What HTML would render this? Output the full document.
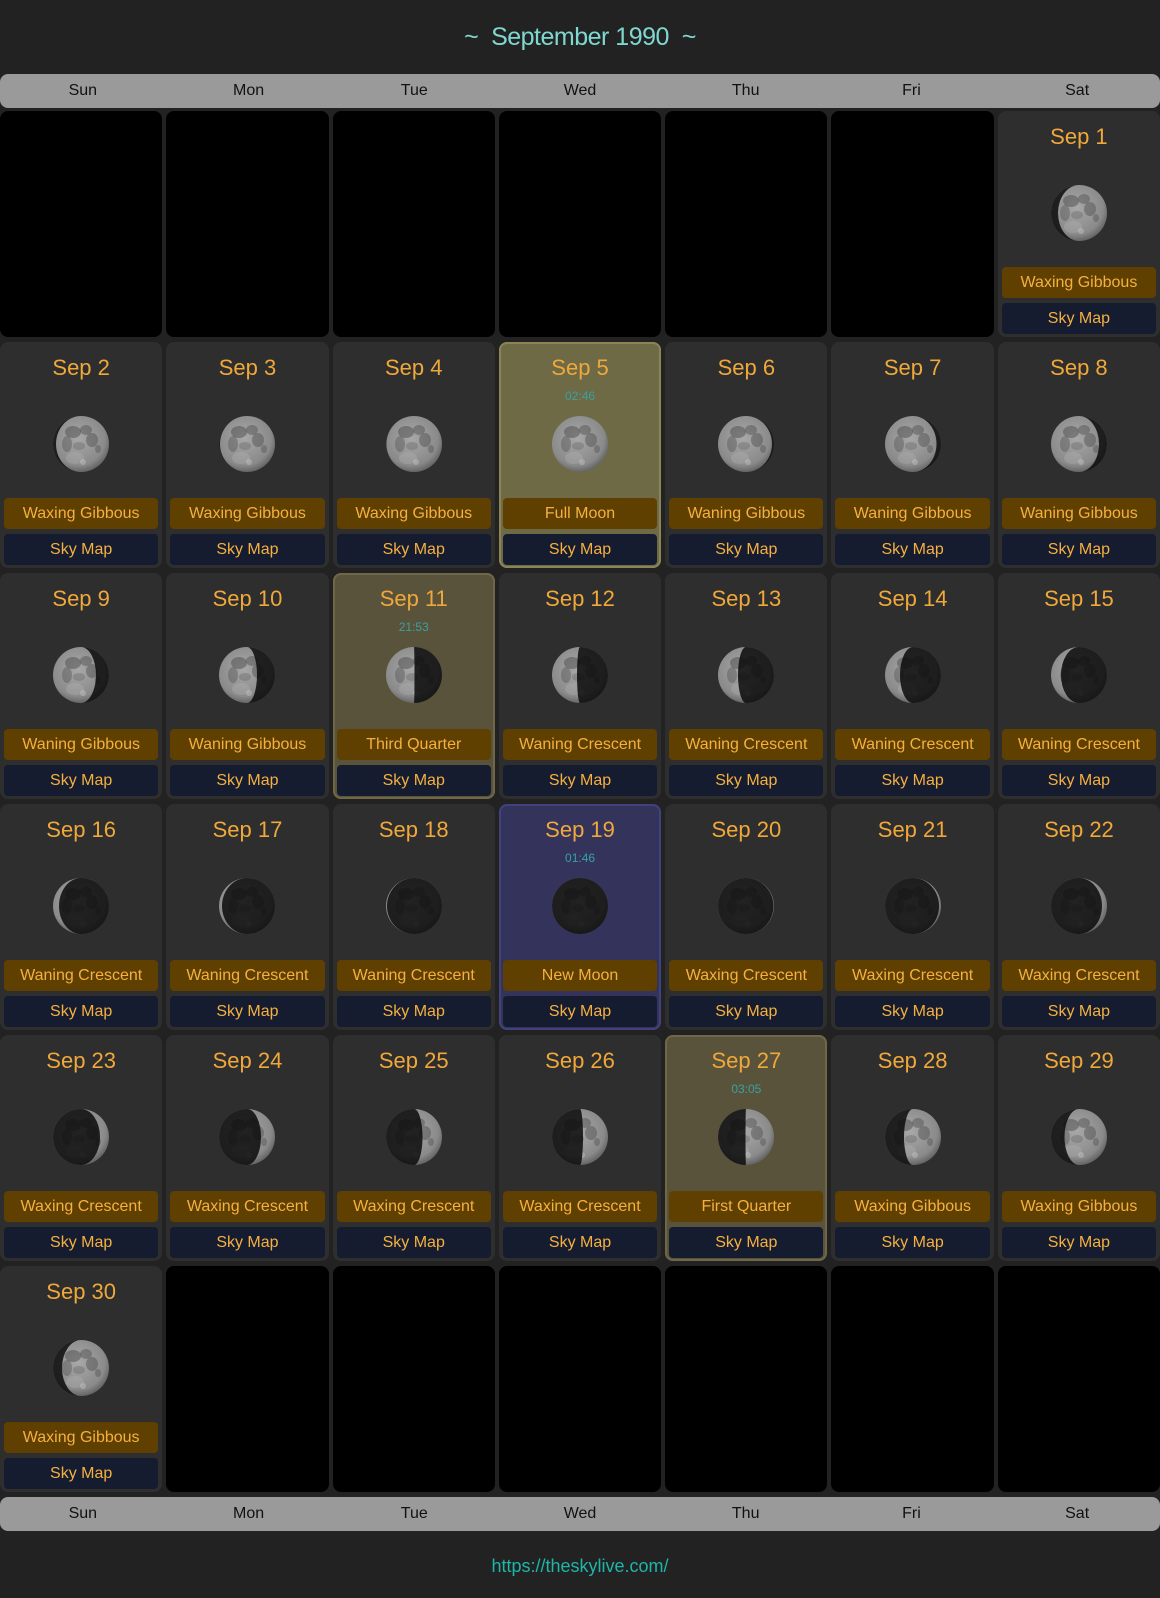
<!DOCTYPE html>
<html><head><meta charset="utf-8"><style>
*{box-sizing:border-box;margin:0;padding:0}
body{width:1160px;height:1598px;background:#222;font-family:"Liberation Sans",sans-serif;position:relative;overflow:hidden}
.title{position:absolute;top:23px;width:100%;text-align:center;color:#7fd8d0;font-size:25px;letter-spacing:-0.5px}
.hdr{position:absolute;left:0;width:1160px;height:34px;background:#9a9a9a;border-radius:8px;display:grid;grid-template-columns:repeat(7,1fr);color:#111;font-size:16px;line-height:34px;text-align:center}
.grid{position:absolute;top:111px;left:0;width:1160px;display:grid;grid-template-columns:repeat(7,162.3px);column-gap:4px;row-gap:5px;grid-auto-rows:226px}
.c{background:#2e2e2e;border-radius:8px;position:relative}
.e{background:#000}
.f{background:#6e6a46;box-shadow:inset 0 0 0 2px #8a8456}
.q{background:#5a533b;box-shadow:inset 0 0 0 2px #6f6748}
.n{background:#33335c;box-shadow:inset 0 0 0 2px #42427a}
.d{position:absolute;top:13px;width:100%;text-align:center;font-size:22px;color:#f0a83a}
.t{position:absolute;top:47px;width:100%;text-align:center;font-size:12px;color:#3aa0a0}
.m{position:absolute;top:74px;left:calc(50% - 28px);width:56px;height:56px}
.p,.s{position:absolute;left:4px;right:4px;height:31px;border-radius:4px;color:#f5b040;font-size:16px;line-height:31px;text-align:center}
.p{top:156px;background:#5f4000}
.s{top:192px;background:#161c2f}
.foot{position:absolute;top:1556px;width:100%;text-align:center;color:#1fb5a8;font-size:18px}
</style></head><body>
<svg width="0" height="0" style="position:absolute"><defs>
<radialGradient id="g" cx="45%" cy="40%" r="60%"><stop offset="0" stop-color="#a8a8a8"/><stop offset="0.8" stop-color="#8a8a8a"/><stop offset="1" stop-color="#666"/></radialGradient>
<g id="t"><circle cx="28" cy="28" r="28" fill="url(#g)"/>
<ellipse cx="20" cy="16" rx="8" ry="6" fill="#444" opacity=".45"/>
<ellipse cx="33" cy="14" rx="6" ry="5" fill="#444" opacity=".4"/>
<ellipse cx="39" cy="24" rx="6" ry="7" fill="#444" opacity=".4"/>
<ellipse cx="14" cy="28" rx="5" ry="8" fill="#444" opacity=".35"/>
<ellipse cx="26" cy="30" rx="6" ry="4" fill="#555" opacity=".3"/>
<ellipse cx="45" cy="33" rx="3" ry="4" fill="#444" opacity=".35"/>
<ellipse cx="22" cy="42" rx="9" ry="6" fill="#bbb" opacity=".3"/>
<circle cx="30" cy="46" r="3" fill="#ccc" opacity=".4"/></g>
</defs></svg>
<div class="title">~&nbsp;&nbsp;September 1990&nbsp;&nbsp;~</div>
<div class="hdr" style="top:74px"><div>Sun</div><div>Mon</div><div>Tue</div><div>Wed</div><div>Thu</div><div>Fri</div><div>Sat</div></div>
<div class="grid">
<div class="c e"></div><div class="c e"></div><div class="c e"></div><div class="c e"></div><div class="c e"></div><div class="c e"></div>
<div class="c"><div class="d">Sep 1</div><svg class="m" viewBox="0 0 56 56"><use href="#t"/><path d="M28 0A28 28 0 0 0 28 56A21 28 0 0 1 28 0Z" fill="#0a0a0a" opacity=".85"/></svg><div class="p">Waxing Gibbous</div><div class="s">Sky Map</div></div>

<div class="c"><div class="d">Sep 2</div><svg class="m" viewBox="0 0 56 56"><use href="#t"/><path d="M28 0A28 28 0 0 0 28 56A25 28 0 0 1 28 0Z" fill="#0a0a0a" opacity=".85"/></svg><div class="p">Waxing Gibbous</div><div class="s">Sky Map</div></div>
<div class="c"><div class="d">Sep 3</div><svg class="m" viewBox="0 0 56 56"><use href="#t"/><path d="M28 0A28 28 0 0 0 28 56A27 28 0 0 1 28 0Z" fill="#0a0a0a" opacity=".85"/></svg><div class="p">Waxing Gibbous</div><div class="s">Sky Map</div></div>
<div class="c"><div class="d">Sep 4</div><svg class="m" viewBox="0 0 56 56"><use href="#t"/><path d="M28 0A28 28 0 0 0 28 56A27.6 28 0 0 1 28 0Z" fill="#0a0a0a" opacity=".85"/></svg><div class="p">Waxing Gibbous</div><div class="s">Sky Map</div></div>
<div class="c f"><div class="d">Sep 5</div><div class="t">02:46</div><svg class="m" viewBox="0 0 56 56"><use href="#t"/></svg><div class="p">Full Moon</div><div class="s">Sky Map</div></div>
<div class="c"><div class="d">Sep 6</div><svg class="m" viewBox="0 0 56 56"><use href="#t"/><path d="M28 0A28 28 0 0 1 28 56A26 28 0 0 0 28 0Z" fill="#0a0a0a" opacity=".85"/></svg><div class="p">Waning Gibbous</div><div class="s">Sky Map</div></div>
<div class="c"><div class="d">Sep 7</div><svg class="m" viewBox="0 0 56 56"><use href="#t"/><path d="M28 0A28 28 0 0 1 28 56A23.5 28 0 0 0 28 0Z" fill="#0a0a0a" opacity=".85"/></svg><div class="p">Waning Gibbous</div><div class="s">Sky Map</div></div>
<div class="c"><div class="d">Sep 8</div><svg class="m" viewBox="0 0 56 56"><use href="#t"/><path d="M28 0A28 28 0 0 1 28 56A20 28 0 0 0 28 0Z" fill="#0a0a0a" opacity=".85"/></svg><div class="p">Waning Gibbous</div><div class="s">Sky Map</div></div>

<div class="c"><div class="d">Sep 9</div><svg class="m" viewBox="0 0 56 56"><use href="#t"/><path d="M28 0A28 28 0 0 1 28 56A15 28 0 0 0 28 0Z" fill="#0a0a0a" opacity=".85"/></svg><div class="p">Waning Gibbous</div><div class="s">Sky Map</div></div>
<div class="c"><div class="d">Sep 10</div><svg class="m" viewBox="0 0 56 56"><use href="#t"/><path d="M28 0A28 28 0 0 1 28 56A10 28 0 0 0 28 0Z" fill="#0a0a0a" opacity=".85"/></svg><div class="p">Waning Gibbous</div><div class="s">Sky Map</div></div>
<div class="c q"><div class="d">Sep 11</div><div class="t">21:53</div><svg class="m" viewBox="0 0 56 56"><use href="#t"/><path d="M28 0A28 28 0 0 1 28 56A0.5 28 0 0 0 28 0Z" fill="#0a0a0a" opacity=".85"/></svg><div class="p">Third Quarter</div><div class="s">Sky Map</div></div>
<div class="c"><div class="d">Sep 12</div><svg class="m" viewBox="0 0 56 56"><use href="#t"/><path d="M28 0A28 28 0 0 1 28 56A3 28 0 0 1 28 0Z" fill="#0a0a0a" opacity=".85"/></svg><div class="p">Waning Crescent</div><div class="s">Sky Map</div></div>
<div class="c"><div class="d">Sep 13</div><svg class="m" viewBox="0 0 56 56"><use href="#t"/><path d="M28 0A28 28 0 0 1 28 56A8 28 0 0 1 28 0Z" fill="#0a0a0a" opacity=".85"/></svg><div class="p">Waning Crescent</div><div class="s">Sky Map</div></div>
<div class="c"><div class="d">Sep 14</div><svg class="m" viewBox="0 0 56 56"><use href="#t"/><path d="M28 0A28 28 0 0 1 28 56A13 28 0 0 1 28 0Z" fill="#0a0a0a" opacity=".85"/></svg><div class="p">Waning Crescent</div><div class="s">Sky Map</div></div>
<div class="c"><div class="d">Sep 15</div><svg class="m" viewBox="0 0 56 56"><use href="#t"/><path d="M28 0A28 28 0 0 1 28 56A18 28 0 0 1 28 0Z" fill="#0a0a0a" opacity=".85"/></svg><div class="p">Waning Crescent</div><div class="s">Sky Map</div></div>

<div class="c"><div class="d">Sep 16</div><svg class="m" viewBox="0 0 56 56"><use href="#t"/><path d="M28 0A28 28 0 0 1 28 56A22 28 0 0 1 28 0Z" fill="#0a0a0a" opacity=".85"/></svg><div class="p">Waning Crescent</div><div class="s">Sky Map</div></div>
<div class="c"><div class="d">Sep 17</div><svg class="m" viewBox="0 0 56 56"><use href="#t"/><path d="M28 0A28 28 0 0 1 28 56A25 28 0 0 1 28 0Z" fill="#0a0a0a" opacity=".85"/></svg><div class="p">Waning Crescent</div><div class="s">Sky Map</div></div>
<div class="c"><div class="d">Sep 18</div><svg class="m" viewBox="0 0 56 56"><use href="#t"/><path d="M28 0A28 28 0 0 1 28 56A27 28 0 0 1 28 0Z" fill="#0a0a0a" opacity=".85"/></svg><div class="p">Waning Crescent</div><div class="s">Sky Map</div></div>
<div class="c n"><div class="d">Sep 19</div><div class="t">01:46</div><svg class="m" viewBox="0 0 56 56"><use href="#t"/><circle cx="28" cy="28" r="28" fill="#0a0a0a" opacity=".85"/></svg><div class="p">New Moon</div><div class="s">Sky Map</div></div>
<div class="c"><div class="d">Sep 20</div><svg class="m" viewBox="0 0 56 56"><use href="#t"/><path d="M28 0A28 28 0 0 0 28 56A27.4 28 0 0 0 28 0Z" fill="#0a0a0a" opacity=".85"/></svg><div class="p">Waxing Crescent</div><div class="s">Sky Map</div></div>
<div class="c"><div class="d">Sep 21</div><svg class="m" viewBox="0 0 56 56"><use href="#t"/><path d="M28 0A28 28 0 0 0 28 56A26 28 0 0 0 28 0Z" fill="#0a0a0a" opacity=".85"/></svg><div class="p">Waxing Crescent</div><div class="s">Sky Map</div></div>
<div class="c"><div class="d">Sep 22</div><svg class="m" viewBox="0 0 56 56"><use href="#t"/><path d="M28 0A28 28 0 0 0 28 56A23 28 0 0 0 28 0Z" fill="#0a0a0a" opacity=".85"/></svg><div class="p">Waxing Crescent</div><div class="s">Sky Map</div></div>

<div class="c"><div class="d">Sep 23</div><svg class="m" viewBox="0 0 56 56"><use href="#t"/><path d="M28 0A28 28 0 0 0 28 56A19 28 0 0 0 28 0Z" fill="#0a0a0a" opacity=".85"/></svg><div class="p">Waxing Crescent</div><div class="s">Sky Map</div></div>
<div class="c"><div class="d">Sep 24</div><svg class="m" viewBox="0 0 56 56"><use href="#t"/><path d="M28 0A28 28 0 0 0 28 56A14 28 0 0 0 28 0Z" fill="#0a0a0a" opacity=".85"/></svg><div class="p">Waxing Crescent</div><div class="s">Sky Map</div></div>
<div class="c"><div class="d">Sep 25</div><svg class="m" viewBox="0 0 56 56"><use href="#t"/><path d="M28 0A28 28 0 0 0 28 56A8.5 28 0 0 0 28 0Z" fill="#0a0a0a" opacity=".85"/></svg><div class="p">Waxing Crescent</div><div class="s">Sky Map</div></div>
<div class="c"><div class="d">Sep 26</div><svg class="m" viewBox="0 0 56 56"><use href="#t"/><path d="M28 0A28 28 0 0 0 28 56A3 28 0 0 0 28 0Z" fill="#0a0a0a" opacity=".85"/></svg><div class="p">Waxing Crescent</div><div class="s">Sky Map</div></div>
<div class="c q"><div class="d">Sep 27</div><div class="t">03:05</div><svg class="m" viewBox="0 0 56 56"><use href="#t"/><path d="M28 0A28 28 0 0 0 28 56A0.5 28 0 0 1 28 0Z" fill="#0a0a0a" opacity=".85"/></svg><div class="p">First Quarter</div><div class="s">Sky Map</div></div>
<div class="c"><div class="d">Sep 28</div><svg class="m" viewBox="0 0 56 56"><use href="#t"/><path d="M28 0A28 28 0 0 0 28 56A9 28 0 0 1 28 0Z" fill="#0a0a0a" opacity=".85"/></svg><div class="p">Waxing Gibbous</div><div class="s">Sky Map</div></div>
<div class="c"><div class="d">Sep 29</div><svg class="m" viewBox="0 0 56 56"><use href="#t"/><path d="M28 0A28 28 0 0 0 28 56A14.5 28 0 0 1 28 0Z" fill="#0a0a0a" opacity=".85"/></svg><div class="p">Waxing Gibbous</div><div class="s">Sky Map</div></div>

<div class="c"><div class="d">Sep 30</div><svg class="m" viewBox="0 0 56 56"><use href="#t"/><path d="M28 0A28 28 0 0 0 28 56A19 28 0 0 1 28 0Z" fill="#0a0a0a" opacity=".85"/></svg><div class="p">Waxing Gibbous</div><div class="s">Sky Map</div></div>
<div class="c e"></div><div class="c e"></div><div class="c e"></div><div class="c e"></div><div class="c e"></div><div class="c e"></div>
</div>
<div class="hdr" style="top:1497px"><div>Sun</div><div>Mon</div><div>Tue</div><div>Wed</div><div>Thu</div><div>Fri</div><div>Sat</div></div>
<div class="foot">https://theskylive.com/</div>
</body></html>
